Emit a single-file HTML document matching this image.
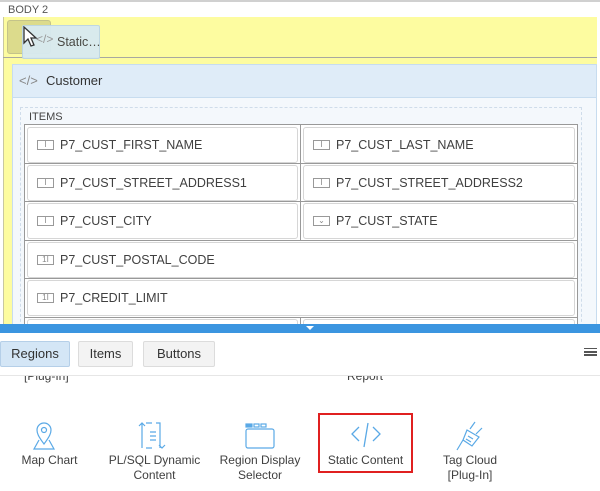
<!DOCTYPE html><html><head><style>
*{box-sizing:border-box;margin:0;padding:0}
body{width:600px;height:491px;overflow:hidden;background:#fff;font-family:"Liberation Sans",sans-serif;position:relative;color:#404040}
.a{position:absolute}
.it{position:absolute;height:36px;border:1px solid #d6d6d6;border-radius:3px;background:#fff;font-size:12.5px;line-height:34px;padding-left:32px;color:#404040}
.ic{position:absolute;left:9px;top:12px;width:17px;height:10px;border:1px solid #999;font-size:8px;line-height:8px;text-align:center;color:#888}
.btn{position:absolute;top:341px;height:26px;border:1px solid #dcdcdc;border-radius:2px;background:#f3f3f3;font-size:13px;line-height:24px;text-align:center;color:#333}
.lb{position:absolute;font-size:12px;line-height:15px;text-align:center;color:#404040}
</style></head><body>
<div class="a" style="left:0;top:0;width:600px;height:2px;background:#d0d0d0"></div>
<div class="a" style="left:8px;top:4px;font-size:11px;color:#555">BODY 2</div>
<div class="a" style="left:3px;top:17px;width:594px;height:310px;background:#fdfca0;border-left:1px solid #c9c8a0"></div>
<div class="a" style="left:3px;top:57px;width:594px;height:1px;background:#a8a8a0"></div>
<div class="a" style="left:7px;top:20px;width:44px;height:34px;background:#dcdb8c;border-radius:3px;border:1px solid #c4c38a"></div>
<div class="a" style="left:22px;top:25px;width:78px;height:34px;background:#d8eaf2;opacity:.95;border:1px solid #bcd6e6;border-radius:2px;font-size:12.5px;line-height:32px;padding-left:34px;color:#404040">Static…</div>
<div class="a" style="left:36px;top:32px;color:#999;font-size:12px">&lt;/&gt;</div>
<svg class="a" style="left:22px;top:26px" width="16" height="22"><path d="M2 1 L2 17 L6 13 L9 20 L12 19 L9 12 L14 12 Z" fill="#fff" stroke="#333" stroke-width="1.3"/></svg>
<div class="a" style="left:12px;top:64px;width:585px;height:265px;background:#f4f8fc;border:1px solid #c7dcef"></div>
<div class="a" style="left:12px;top:64px;width:585px;height:34px;background:#dfecf8;border:1px solid #c7dcef;font-size:13px;line-height:32px;padding-left:33px;color:#333">Customer</div>
<div class="a" style="left:19px;top:73px;color:#888;font-size:13px">&lt;/&gt;</div>
<div class="a" style="left:20px;top:107px;width:562px;height:225px;border:1px dashed #cfdcea"></div>
<div class="a" style="left:29px;top:111px;font-size:11px;color:#444">ITEMS</div>
<div class="a" style="left:24px;top:124px;width:554px;height:210px;background:#fff;border:1px solid #999"></div>
<div class="a" style="left:300px;top:124px;width:1px;height:116px;background:#999"></div>
<div class="a" style="left:24px;top:163px;width:554px;height:1px;background:#999"></div>
<div class="a" style="left:24px;top:201px;width:554px;height:1px;background:#999"></div>
<div class="a" style="left:24px;top:240px;width:554px;height:1px;background:#999"></div>
<div class="a" style="left:24px;top:278px;width:554px;height:1px;background:#999"></div>
<div class="a" style="left:24px;top:317px;width:554px;height:1px;background:#999"></div>
<div class="a" style="left:300px;top:317px;width:1px;height:10px;background:#999"></div>
<div class="it" style="left:27px;top:127px;width:271px"><span class="ic">I</span>P7_CUST_FIRST_NAME</div>
<div class="it" style="left:303px;top:127px;width:272px"><span class="ic">I</span>P7_CUST_LAST_NAME</div>
<div class="it" style="left:27px;top:165px;width:271px"><span class="ic">I</span>P7_CUST_STREET_ADDRESS1</div>
<div class="it" style="left:303px;top:165px;width:272px"><span class="ic">I</span>P7_CUST_STREET_ADDRESS2</div>
<div class="it" style="left:27px;top:203px;width:271px"><span class="ic">I</span>P7_CUST_CITY</div>
<div class="it" style="left:303px;top:203px;width:272px"><span class="ic">⌄</span>P7_CUST_STATE</div>
<div class="it" style="left:27px;top:242px;width:548px"><span class="ic">1I</span>P7_CUST_POSTAL_CODE</div>
<div class="it" style="left:27px;top:280px;width:548px"><span class="ic">1I</span>P7_CREDIT_LIMIT</div>
<div class="it" style="left:27px;top:319px;width:271px"></div>
<div class="it" style="left:303px;top:319px;width:272px"></div>
<div class="a" style="left:0;top:333px;width:600px;height:158px;background:#fff"></div>
<div class="a" style="left:0;top:324px;width:600px;height:9px;background:#3b95e0"></div>
<div class="a" style="left:306px;top:326px;width:0;height:0;border-left:4px solid transparent;border-right:4px solid transparent;border-top:4px solid #fff"></div>
<div class="btn" style="left:0;width:70px;background:#d4e6f6;border-color:#b5cfe8">Regions</div>
<div class="btn" style="left:78px;width:55px">Items</div>
<div class="btn" style="left:143px;width:72px">Buttons</div>
<div class="a" style="left:584px;top:348px;width:13px;height:2px;border-top:1px solid #555;box-shadow:0 3px 0 #555,0 6px 0 #555"></div>
<div class="a" style="left:0;top:375px;width:600px;height:1px;background:#e6e6e6"></div>
<div class="a" style="left:0;top:376px;width:600px;height:8px;overflow:hidden"><div class="lb" style="left:24px;top:-7px">[Plug-In]</div><div class="lb" style="left:347px;top:-7px">Report</div></div>
<svg class="a" style="left:30px;top:420px" width="40" height="32" fill="none" stroke="#5aa9e6" stroke-width="1.2"><path d="M14 24 C8 16 7 13 7 10 A7 7 0 0 1 21 10 C21 13 20 16 14 24Z"/><circle cx="14" cy="10" r="2.5"/><path d="M9 20 L4 29 L24 29 L19 20"/></svg>
<svg class="a" style="left:138px;top:420px" width="32" height="32" fill="none" stroke="#5aa9e6" stroke-width="1.2"><path d="M4 3 V28 M1 6 L4 3 L7 6"/><path d="M8 3 H14 M8 28 H14 M18 3 H22 V28 M21 25 L24 28 L27 25"/><path d="M12 12 H18 M12 16 H18 M12 20 H18"/></svg>
<svg class="a" style="left:244px;top:420px" width="32" height="32" fill="none" stroke="#5aa9e6" stroke-width="1.2"><rect x="2" y="9" width="28" height="19" rx="2"/><rect x="2" y="4" width="6" height="3" fill="#5aa9e6"/><rect x="10" y="4" width="5" height="3"/><rect x="17" y="4" width="5" height="3"/></svg>
<div class="a" style="left:318px;top:413px;width:95px;height:60px;border:2px solid #e02020"></div>
<svg class="a" style="left:350px;top:420px" width="32" height="30" fill="none" stroke="#5aa9e6" stroke-width="1.3"><path d="M9 7 L2 14 L9 21 M23 7 L30 14 L23 21 M18 3 L14 27"/></svg>
<svg class="a" style="left:455px;top:420px" width="32" height="32" fill="none" stroke="#5aa9e6" stroke-width="1.2"><path d="M20 2 L15 9 M27 8 L21 14 M12 10 L24 17 L17 26 L8 20 Z M8 20 L2 30 M13 16 L18 19 M11 19 L16 22"/></svg>
<div class="lb" style="left:12px;top:453px;width:75px">Map Chart</div>
<div class="lb" style="left:102px;top:453px;width:105px">PL/SQL Dynamic<br>Content</div>
<div class="lb" style="left:210px;top:453px;width:100px">Region Display<br>Selector</div>
<div class="lb" style="left:318px;top:453px;width:95px">Static Content</div>
<div class="lb" style="left:425px;top:453px;width:90px">Tag Cloud<br>[Plug-In]</div>
</body></html>
